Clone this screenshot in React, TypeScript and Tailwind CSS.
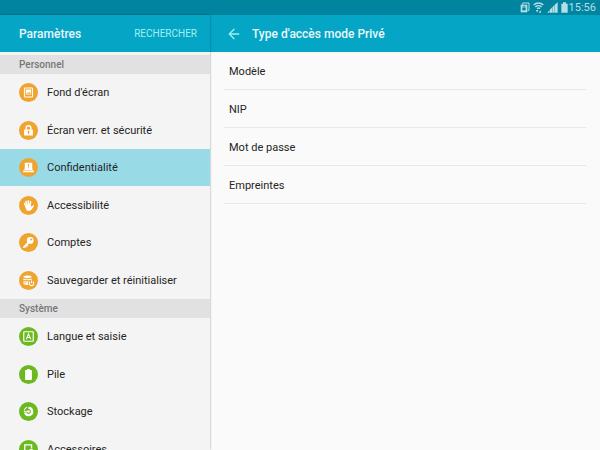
import { useState } from 'react';
import type { ReactNode } from 'react';
import { ArrowLeft } from 'lucide-react';

interface SettingItem {
  id: string;
  label: string;
  icon: ReactNode;
}

interface SettingSection {
  title: string;
  color: string;
  items: SettingItem[];
}

const sections: SettingSection[] = [
  {
    title: 'Personnel',
    color: 'bg-[#eea42f]',
    items: [
      {
        id: 'wallpaper',
        label: "Fond d'écran",
        icon: (
          <>
            <rect x="16" y="15" width="24" height="26" rx="2" fill="none" stroke="currentColor" strokeWidth="3" />
            <rect x="20" y="19" width="16" height="15" fill="currentColor" />
            <path d="M21 32l4-5 3 3 3.500-4 3.500 6z" fill="#eea42f" />
          </>
        ),
      },
      {
        id: 'lock',
        label: 'Écran verr. et sécurité',
        icon: (
          <>
            <path d="M21 26v-5a7 7 0 0 1 14 0v5" fill="none" stroke="currentColor" strokeWidth="4" />
            <rect x="15" y="25" width="26" height="18" rx="2" fill="currentColor" />
            <path d="M28 29a3 3 0 0 1 1.500 5.500V39h-3v-4.500A3 3 0 0 1 28 29z" fill="#eea42f" />
          </>
        ),
      },
      {
        id: 'privacy',
        label: 'Confidentialité',
        icon: (
          <>
            <path d="M17 14h22v17a4 4 0 0 0 4 4H13a4 4 0 0 0 4-4z" fill="currentColor" />
            <rect x="12" y="37" width="32" height="5" rx="1" fill="currentColor" />
            <path d="M26.500 18h3v7h-3zM26.500 27h3v3h-3z" fill="#eea42f" />
          </>
        ),
      },
      {
        id: 'accessibility',
        label: 'Accessibilité',
        icon: (
          <>
            <path
              d="M20.500 31l-4-9M24.500 28l-4-12M28.500 28l-1-14M32.500 29l1.500-12"
              stroke="currentColor"
              strokeWidth="4.400"
              strokeLinecap="round"
            />
            <path
              d="M18.500 28l16-1 1.500 5 5-4c2-1.500 4.500 0 3 2.500L37 40c-2 3-5 4-9 4-5 0-7-3-8-7z"
              fill="currentColor"
            />
          </>
        ),
      },
      {
        id: 'accounts',
        label: 'Comptes',
        icon: (
          <>
            <path d="M28 28L14.500 41.500" stroke="currentColor" strokeWidth="5.500" strokeLinecap="round" />
            <path d="M22 33l5 5M17.500 37.500l4.500 4.500" stroke="currentColor" strokeWidth="4" />
            <circle cx="33" cy="22" r="10" fill="currentColor" />
            <circle cx="36" cy="19" r="3" fill="#eea42f" />
          </>
        ),
      },
      {
        id: 'backup',
        label: 'Sauvegarder et réinitialiser',
        icon: (
          <>
            <ellipse cx="25" cy="17" rx="12" ry="4" fill="currentColor" />
            <path d="M13 22c5 3 19 3 24 0v5.500H13zM13 30h15v11c-6 0-12-1-15-3z" fill="currentColor" />
            <path d="M13 28.800h13M13 35h12" stroke="#eea42f" strokeWidth="2" />
            <circle cx="37" cy="36" r="9.500" fill="#eea42f" />
            <path
              d="M33 31.500a6.500 6.500 0 1 0 8 0M37 28v8"
              fill="none"
              stroke="currentColor"
              strokeWidth="3"
            />
          </>
        ),
      },
    ],
  },
  {
    title: 'Système',
    color: 'bg-[#6cb91f]',
    items: [
      {
        id: 'language',
        label: 'Langue et saisie',
        icon: (
          <>
            <rect x="14" y="14" width="28" height="28" rx="2" fill="none" stroke="currentColor" strokeWidth="3.500" />
            <path d="M21.500 36L28 20l6.500 16M24 31h8" fill="none" stroke="currentColor" strokeWidth="3" />
          </>
        ),
      },
      {
        id: 'battery',
        label: 'Pile',
        icon: (
          <path
            d="M24 11.500h8V15h4a2 2 0 0 1 2 2v25a2 2 0 0 1-2 2H20a2 2 0 0 1-2-2V17a2 2 0 0 1 2-2h4z"
            fill="currentColor"
          />
        ),
      },
      {
        id: 'storage',
        label: 'Stockage',
        icon: (
          <>
            <path d="M28 17.500a10.500 10.500 0 1 1-10 13.500" fill="none" stroke="currentColor" strokeWidth="7" />
            <path d="M15.500 25a12.500 12.500 0 0 1 8.500-9.500" fill="none" stroke="currentColor" strokeWidth="3" />
            <circle cx="28" cy="28" r="4" fill="currentColor" />
            <path d="M14 28h12" stroke="currentColor" strokeWidth="2.500" />
          </>
        ),
      },
      {
        id: 'accessories',
        label: 'Accessoires',
        icon: (
          <>
            <path d="M25 40h-8V14.500h20V25" fill="none" stroke="currentColor" strokeWidth="4" />
            <circle cx="36" cy="34" r="6" fill="none" stroke="currentColor" strokeWidth="3.500" />
            <path d="M36 31v6M33 34h6" stroke="currentColor" strokeWidth="2" />
          </>
        ),
      },
    ],
  },
];

const accessTypes = ['Modèle', 'NIP', 'Mot de passe', 'Empreintes'];

function StatusBar() {
  return (
    <div className="flex h-[15px] shrink-0 items-center justify-end gap-[3px] bg-[#00849f] pr-1 text-[#b5dfe7]">
      <svg viewBox="0 0 30 33" className="h-[11px] w-[10px]" aria-hidden="true">
        <path d="M8 8V3h19v22h-4" fill="none" stroke="currentColor" strokeWidth="3" />
        <path d="M2 8h20v23H2z" fill="currentColor" />
        <path d="M9 17v-2a3 3 0 0 1 6 0v2" fill="none" stroke="#00849f" strokeWidth="2.500" />
        <path d="M7 17h10v8H7z" fill="#00849f" />
      </svg>
      <svg viewBox="0 0 33 33" className="h-[11px] w-[11px]" aria-hidden="true">
        <path
          d="M2 9a21 21 0 0 1 29 0M7 15a14 14 0 0 1 19 0M12 20a7 7 0 0 1 9 0"
          fill="none"
          stroke="currentColor"
          strokeWidth="4.500"
        />
        <path d="M9 24h7l-3.500 8zM18 32h7l-3.500-8z" fill="currentColor" />
      </svg>
      <svg viewBox="0 0 33 33" className="h-[11px] w-[11px]" aria-hidden="true">
        <path d="M1 32h7v-8zM9 32h6.500V16L9 22.500zM16.500 32H23V8.500L16.500 15zM24 32h8V1l-8 6.500z" fill="currentColor" />
      </svg>
      <div className="flex items-center gap-px">
        <svg viewBox="0 0 21 33" className="h-[11px] w-[7px]" aria-hidden="true">
          <path d="M6 1h9v4h5v27H1V5h5z" fill="currentColor" />
        </svg>
        <span className="text-[11px] leading-none">15:56</span>
      </div>
    </div>
  );
}

export default function App() {
  const [selected, setSelected] = useState('privacy');

  return (
    <div className="flex h-screen flex-col overflow-hidden bg-[#fafafa] font-['Roboto',sans-serif] text-[11px] text-[#252525]">
      <StatusBar />
      <div className="flex min-h-0 flex-1">
        <aside className="z-10 flex w-[35%] shrink-0 flex-col bg-[#f4f4f4] shadow-[0_0_2px_rgba(0,0,0,0.4)]">
          <header className="flex h-[37px] shrink-0 items-center justify-between bg-[#05a5c6] pr-[13px] pl-[19px]">
            <h1 className="text-[12px] font-medium text-[#e9f7fa]">Paramètres</h1>
            <button type="button" className="text-[10px] text-[#a0f0f0]">
              RECHERCHER
            </button>
          </header>
          <nav className="min-h-0 flex-1 overflow-hidden pt-[3px]">
            {sections.map((section) => (
              <section key={section.title}>
                <h2 className="flex h-[19px] items-center bg-[#e1e1e1] pl-[19px] text-[10px] font-medium text-[#777777]">
                  {section.title}
                </h2>
                <ul>
                  {section.items.map((item) => (
                    <li key={item.id} className="odd:h-[37px] even:h-[38px]">
                      <button
                        type="button"
                        onClick={() => setSelected(item.id)}
                        aria-pressed={selected === item.id}
                        className={`flex h-full w-full items-center gap-[9px] pl-[19px] text-left ${
                          selected === item.id ? 'bg-[#98dbe7]' : ''
                        }`}
                      >
                        <span className={`h-[19px] w-[19px] shrink-0 rounded-full text-white ${section.color}`}>
                          <svg viewBox="0 0 56 56" fill="none" className="h-full w-full" aria-hidden="true">
                            {item.icon}
                          </svg>
                        </span>
                        <span className="pt-[2px] whitespace-nowrap">{item.label}</span>
                      </button>
                    </li>
                  ))}
                </ul>
              </section>
            ))}
          </nav>
        </aside>

        <main className="min-w-0 flex-1">
          <header className="flex h-[37px] items-center gap-[10px] bg-[#05a5c6] pl-4">
            <button type="button" aria-label="Retour" className="text-[#a0f0f0]">
              <ArrowLeft className="h-4 w-4" strokeWidth={2} />
            </button>
            <h2 className="text-[12px] font-medium text-[#e9f7fa]">Type d'accès mode Privé</h2>
          </header>
          <ul className="px-[14px]">
            {accessTypes.map((type) => (
              <li key={type} className="h-[38px] border-b border-[#e8e8e8]">
                <button type="button" className="flex h-full w-full items-center pt-[3px] pl-[5px] text-left">
                  {type}
                </button>
              </li>
            ))}
          </ul>
        </main>
      </div>
    </div>
  );
}
